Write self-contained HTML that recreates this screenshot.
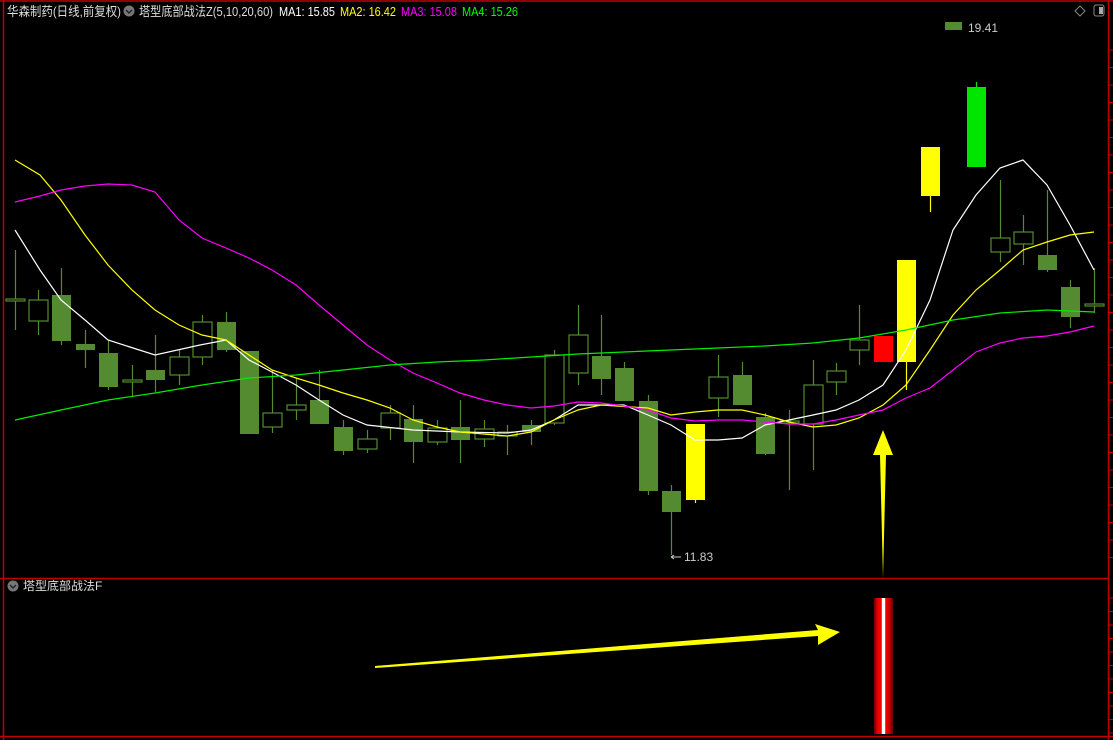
<!DOCTYPE html>
<html><head><meta charset="utf-8"><style>
html,body{margin:0;padding:0;background:#000;width:1113px;height:740px;overflow:hidden}
svg{display:block}
text{font-family:"Liberation Sans","Noto Sans CJK SC",sans-serif}
</style></head><body>
<svg id="s" width="1113" height="740" viewBox="0 0 1113 740">
<rect width="1113" height="740" fill="#000"/>
<g stroke="#c00000" stroke-width="1.5" fill="none">
<line x1="0" y1="1" x2="1113" y2="1"/>
<line x1="3.5" y1="0" x2="3.5" y2="740"/>
<line x1="1108.5" y1="0" x2="1108.5" y2="740"/>
<line x1="0" y1="578.5" x2="1108" y2="578.5"/>
<line x1="0" y1="736.5" x2="1113" y2="736.5"/>
</g>
<g id="ticks" stroke="#c00000" stroke-width="1"></g>
<g id="ma" fill="none" stroke-width="1.2"></g>
<g id="c"></g>
<text x="7" y="16" fill="#ddd" font-size="13" textLength="114" lengthAdjust="spacingAndGlyphs">华森制药(日线,前复权)</text>
<circle cx="129" cy="11" r="5.5" fill="#777"/><path d="M126 10l3 3 3-3" stroke="#222" stroke-width="1.4" fill="none"/>
<text x="139" y="16" font-size="13" fill="#ddd" textLength="134" lengthAdjust="spacingAndGlyphs">塔型底部战法Z(5,10,20,60)</text>
<text x="279" y="16" font-size="13" fill="#fff" textLength="56" lengthAdjust="spacingAndGlyphs">MA1: 15.85</text>
<text x="340" y="16" font-size="13" fill="#ff0" textLength="56" lengthAdjust="spacingAndGlyphs">MA2: 16.42</text>
<text x="401" y="16" font-size="13" fill="#f0f" textLength="56" lengthAdjust="spacingAndGlyphs">MA3: 15.08</text>
<text x="462" y="16" font-size="13" fill="#0f0" textLength="56" lengthAdjust="spacingAndGlyphs">MA4: 15.26</text>
<path d="M1080 6l5 5-5 5-5-5z" stroke="#888" fill="none"/>
<rect x="1094" y="5" width="10" height="11" rx="2" stroke="#888" fill="none"/><rect x="1099" y="7" width="4" height="7" fill="#aaa"/>
<rect x="945" y="22" width="17" height="8" fill="#548a30"/>
<text x="968" y="32" font-size="12" fill="#ccc">19.41</text>
<path d="M671 557h10M671 557l3-2M671 557l3 2" stroke="#ccc"/>
<text x="684" y="561" font-size="12" fill="#ccc">11.83</text>
<circle cx="13" cy="586" r="5.5" fill="#777"/><path d="M10 585l3 3 3-3" stroke="#222" stroke-width="1.4" fill="none"/>
<text x="23" y="590" font-size="12" fill="#ddd">塔型底部战法F</text>
<path d="M883 578L880 455L873 455L883 430L893 455L886 455Z" fill="#ff0"/>
<path d="M375 668L375 666L818 630L815 624L840 632L818 645L818 636Z" fill="#ff0"/>
<defs><linearGradient id="g" x1="0" x2="1"><stop offset="0" stop-color="#600"/><stop offset=".2" stop-color="#e00"/><stop offset=".4" stop-color="#f00"/><stop offset=".42" stop-color="#fff"/><stop offset=".58" stop-color="#fff"/><stop offset=".6" stop-color="#f00"/><stop offset=".8" stop-color="#c00"/><stop offset="1" stop-color="#600"/></linearGradient></defs>
<rect x="874" y="598" width="19" height="136" fill="url(#g)"/>
</svg>
<script>
var NS="http://www.w3.org/2000/svg",s=document.getElementById('s');
function el(p,t,a){var e=document.createElementNS(NS,t);for(var k in a)e.setAttribute(k,a[k]);p.appendChild(e);return e}
var tk=document.getElementById('ticks');
for(var y=50;y<575;y+=17.5)el(tk,'line',{x1:1108,x2:1113,y1:y,y2:y});
for(var y=598;y<735;y+=13.5)el(tk,'line',{x1:1108,x2:1113,y1:y,y2:y});
var G='#548a30';
var C=[[15,299,301,250,330,'h'],[38,300,321,290,335,'h'],[61,295,341,268,345,'g'],[85,344,350,330,368,'g'],[108,353,387,340,390,'g'],[132,380,382,365,396,'h'],[155,370,380,335,392,'g'],[179,357,375,350,385,'h'],[202,322,357,315,365,'h'],[226,322,350,312,352,'g'],[249,351,434,351,434,'g'],[272,413,427,370,433,'h'],[296,405,410,378,420,'h'],[319,400,424,370,424,'g'],[343,427,451,420,455,'g'],[367,439,449,430,453,'h'],[390,413,428,405,440,'h'],[413,419,442,405,463,'g'],[437,428,442,420,445,'h'],[460,427,440,400,463,'g'],[484,429,439,420,447,'h'],[507,432,436,425,455,'h'],[531,425,432,420,445,'g'],[554,355,423,350,425,'h'],[578,335,373,305,385,'h'],[601,356,379,315,395,'g'],[624,368,401,362,401,'g'],[648,401,491,395,495,'g'],[671,491,512,485,555,'g'],[695,424,500,424,503,'y'],[718,377,398,355,417,'h'],[742,375,405,362,405,'g'],[765,417,454,413,455,'g'],[789,421,423,410,490,'h'],[813,385,424,360,470,'h'],[836,371,382,363,395,'h'],[859,340,350,305,365,'h'],[883,336,362,336,362,'r'],[906,260,362,260,390,'y'],[930,147,196,147,212,'y'],[976,87,167,82,167,'b'],[1000,238,252,180,262,'h'],[1023,232,244,215,265,'h'],[1047,255,270,190,272,'g'],[1070,287,317,280,328,'g'],[1094,304,306,268,313,'h']];
var cg=document.getElementById('c');
C.forEach(function(c){var col={g:G,h:G,y:'#ff0',r:'#f00',b:'#00e600'}[c[5]];
el(cg,'line',{x1:c[0]+.5,x2:c[0]+.5,y1:c[3],y2:c[4],stroke:col,'stroke-width':1.2});
var h=Math.max(c[2]-c[1],1);
if(c[5]=='h')el(cg,'rect',{x:c[0]-9,y:c[1],width:19,height:h,fill:'#000',stroke:G,'stroke-width':1.2});
else el(cg,'rect',{x:c[0]-9,y:c[1],width:19,height:h,fill:col});});
var M=[['#fff',[[15,230],[40,270],[61,300],[85,320],[108,340],[155,355],[200,345],[226,340],[249,360],[272,372],[296,385],[319,400],[343,415],[367,425],[413,430],[460,432],[507,433],[531,430],[554,420],[578,405],[624,405],[648,415],[671,425],[695,440],[718,440],[742,438],[765,425],[789,420],[813,415],[836,410],[859,400],[883,385],[906,350],[930,300],[953,230],[976,195],[1000,168],[1023,160],[1047,185],[1070,225],[1094,270]]],
['#ff0',[[15,160],[40,175],[61,200],[85,235],[108,265],[132,290],[155,310],[179,325],[202,335],[226,340],[249,355],[272,370],[296,378],[319,385],[343,393],[367,400],[390,408],[413,420],[437,427],[460,432],[507,436],[531,432],[554,420],[578,410],[601,405],[648,408],[671,415],[695,412],[718,410],[742,410],[765,415],[789,422],[813,427],[836,425],[859,418],[883,405],[906,385],[930,350],[953,315],[976,290],[1000,270],[1023,250],[1047,242],[1070,235],[1094,232]]],
['#f0f',[[15,202],[40,196],[61,190],[85,186],[108,184],[132,185],[155,192],[179,220],[202,238],[226,248],[249,258],[272,270],[296,285],[319,305],[343,325],[367,345],[390,360],[413,373],[437,383],[460,393],[484,400],[507,405],[531,408],[554,406],[578,402],[601,403],[624,406],[648,410],[671,418],[695,421],[718,420],[742,420],[765,422],[789,424],[813,424],[836,420],[859,415],[883,410],[906,398],[930,388],[953,370],[976,352],[1000,343],[1023,338],[1047,336],[1070,332],[1094,326]]],
['#0e0',[[15,420],[61,410],[108,400],[155,393],[202,385],[249,378],[296,375],[343,370],[390,365],[437,362],[484,360],[531,357],[578,354],[624,352],[671,350],[718,348],[765,346],[813,343],[859,338],[906,330],[953,320],[1000,313],[1047,310],[1094,312]]]];
var mg=document.getElementById('ma');
M.forEach(function(m){el(mg,'polyline',{points:m[1].map(function(p){return p.join(',')}).join(' '),stroke:m[0]})});
s.insertBefore(mg,cg.nextSibling);
</script>
</body></html>
